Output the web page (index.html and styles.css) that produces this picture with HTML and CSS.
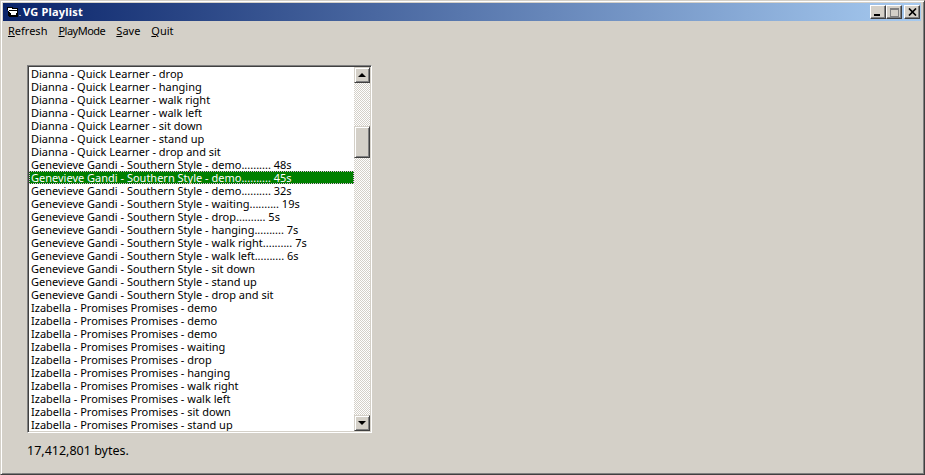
FILE: index.html
```html
<!DOCTYPE html>
<html lang="en">
<head>
<meta charset="utf-8">
<title>VG Playlist</title>
<link rel="stylesheet" href="styles.css">
</head>
<body>
<div class="window">
  <div class="titlebar">
    <svg class="app-icon" width="16" height="16" viewBox="0 0 16 16" shape-rendering="crispEdges">
      <path d="M2 3h6v1h5v9H4v-1H3V6H2z" fill="#000"/>
      <path d="M3 4h4v1h5v1H4v1H3z" fill="#fff"/>
      <path d="M4 7h8v2h-1v2H6V9H5V8H4z" fill="#fff"/>
      <path d="M14 11h2v1h-2z" fill="#9a9a9a"/>
    </svg>
    <span class="title">VG Playlist</span>
    <div class="caption-buttons">
      <div class="cap-btn"><span class="glyph-min"></span></div>
      <div class="cap-btn"><span class="glyph-max"></span></div>
      <div class="cap-btn close-btn">
        <svg width="9" height="8" viewBox="0 0 9 8"><path d="M1 0.5L8 7.5M8 0.5L1 7.5" stroke="#000" stroke-width="1.7" fill="none"/></svg>
      </div>
    </div>
  </div>
  <div class="menubar">
    <span class="menu-item"><u>R</u>efresh</span>
    <span class="menu-item tight"><u>P</u>layMode</span>
    <span class="menu-item"><u>S</u>ave</span>
    <span class="menu-item"><u>Q</u>uit</span>
  </div>
  <div class="content">
    <div class="listbox">
      <div class="rows">
        <div class="row">Dianna - Quick Learner - drop</div>
        <div class="row">Dianna - Quick Learner - hanging</div>
        <div class="row">Dianna - Quick Learner - walk right</div>
        <div class="row">Dianna - Quick Learner - walk left</div>
        <div class="row">Dianna - Quick Learner - sit down</div>
        <div class="row">Dianna - Quick Learner - stand up</div>
        <div class="row">Dianna - Quick Learner - drop and sit</div>
        <div class="row">Genevieve Gandi - Southern Style - demo.......... 48s</div>
        <div class="row selected">Genevieve Gandi - Southern Style - demo.......... 45s</div>
        <div class="row">Genevieve Gandi - Southern Style - demo.......... 32s</div>
        <div class="row">Genevieve Gandi - Southern Style - waiting.......... 19s</div>
        <div class="row">Genevieve Gandi - Southern Style - drop.......... 5s</div>
        <div class="row">Genevieve Gandi - Southern Style - hanging.......... 7s</div>
        <div class="row">Genevieve Gandi - Southern Style - walk right.......... 7s</div>
        <div class="row">Genevieve Gandi - Southern Style - walk left.......... 6s</div>
        <div class="row">Genevieve Gandi - Southern Style - sit down</div>
        <div class="row">Genevieve Gandi - Southern Style - stand up</div>
        <div class="row">Genevieve Gandi - Southern Style - drop and sit</div>
        <div class="row">Izabella - Promises Promises - demo</div>
        <div class="row">Izabella - Promises Promises - demo</div>
        <div class="row">Izabella - Promises Promises - demo</div>
        <div class="row">Izabella - Promises Promises - waiting</div>
        <div class="row">Izabella - Promises Promises - drop</div>
        <div class="row">Izabella - Promises Promises - hanging</div>
        <div class="row">Izabella - Promises Promises - walk right</div>
        <div class="row">Izabella - Promises Promises - walk left</div>
        <div class="row">Izabella - Promises Promises - sit down</div>
        <div class="row">Izabella - Promises Promises - stand up</div>
      </div>
      <div class="scrollbar">
        <div class="sb-btn"><span class="arrow-up"></span></div>
        <div class="sb-track">
          <div class="sb-gap-top"></div>
          <div class="sb-thumb"></div>
        </div>
        <div class="sb-btn"><span class="arrow-down"></span></div>
      </div>
    </div>
    <div class="status">17,412,801 bytes.</div>
  </div>
</div>
</body>
</html>
```
FILE: styles.css
```css
* { box-sizing: border-box; }
html, body { margin: 0; height: 100%; }
body { overflow: hidden; background: #d4d0c8; }
.window {
  width: 925px;
  height: 475px;
  display: flex;
  flex-direction: column;
  background: #d4d0c8;
  padding: 2px 3px 3px 2px;
  border: 1px solid;
  border-color: #d4d0c8 #404040 #404040 #d4d0c8;
  box-shadow: inset 1px 1px 0 #fff, inset -1px -1px 0 #808080;
  font-family: "Noto Sans", "Open Sans", sans-serif;
  font-size: 11px;
  color: #000;
}
.titlebar {
  height: 18px;
  flex: none;
  display: flex;
  align-items: center;
  padding: 0 1px 0 2px;
  background: linear-gradient(90deg, #0a246a, #a6caf0);
  color: #fff;
}
.app-icon { flex: none; margin-right: 2px; }
.title { font-weight: 700; font-size: 11px; letter-spacing: 0.2px; flex: 1; margin-bottom: 2px; }
.caption-buttons { display: flex; flex: none; }
.cap-btn {
  width: 16px;
  height: 14px;
  background: #d4d0c8;
  border: 1px solid;
  border-color: #fff #404040 #404040 #fff;
  box-shadow: inset -1px -1px 0 #808080;
  display: flex;
  align-items: center;
  justify-content: center;
}
.close-btn { margin-left: 2px; }
.glyph-min { width: 6px; height: 2px; background: #000; margin-top: 6px; margin-right: 3px; }
.glyph-max { width: 9px; height: 9px; border: 1px solid #808080; border-top-width: 2px; }
.menubar {
  height: 19px;
  flex: none;
  display: flex;
  align-items: center;
  gap: 11px;
  padding: 0 5px;
}
.menu-item { line-height: 19px; }
.tight { letter-spacing: -0.5px; }
.content {
  flex: 1;
  padding: 25px 0 0 24px;
  display: flex;
  flex-direction: column;
  align-items: flex-start;
}
.listbox {
  width: 345px;
  height: 368px;
  display: flex;
  background: #fff;
  border: 1px solid;
  border-color: #808080 #fff #fff #808080;
  box-shadow: inset 1px 1px 0 #404040, inset -1px -1px 0 #d4d0c8;
  padding: 1px 1px 1px 1px;
}
.rows { flex: 1; min-width: 0; overflow: hidden; }
.row {
  height: 13px;
  line-height: 13px;
  padding-left: 2px;
  white-space: nowrap;
  color: #000;
}
.selected { background: #008000; color: #fff; outline: 1px dotted #e8b0e8; outline-offset: -1px; }
.scrollbar { width: 16px; flex: none; display: flex; flex-direction: column; }
.sb-btn {
  height: 16px;
  flex: none;
  background: #d4d0c8;
  border: 1px solid;
  border-color: #d4d0c8 #404040 #404040 #d4d0c8;
  box-shadow: inset 1px 1px 0 #fff, inset -1px -1px 0 #808080;
  display: flex;
  align-items: center;
  justify-content: center;
}
.arrow-up { width: 0; height: 0; border: 4px solid transparent; border-top: 0; border-bottom-color: #000; }
.arrow-down { width: 0; height: 0; border: 4px solid transparent; border-bottom: 0; border-top-color: #000; }
.sb-track {
  flex: 1;
  background-color: #fff;
  background-image: conic-gradient(#d4d0c8 25%, #fff 0 50%, #d4d0c8 0 75%, #fff 0);
  background-size: 2px 2px;
}
.sb-gap-top { height: 43px; }
.sb-thumb {
  height: 32px;
  background: #d4d0c8;
  border: 1px solid;
  border-color: #d4d0c8 #404040 #404040 #d4d0c8;
  box-shadow: inset 1px 1px 0 #fff, inset -1px -1px 0 #808080;
}
.status { margin-top: 10px; font-size: 12.5px; line-height: 16px; }
```
